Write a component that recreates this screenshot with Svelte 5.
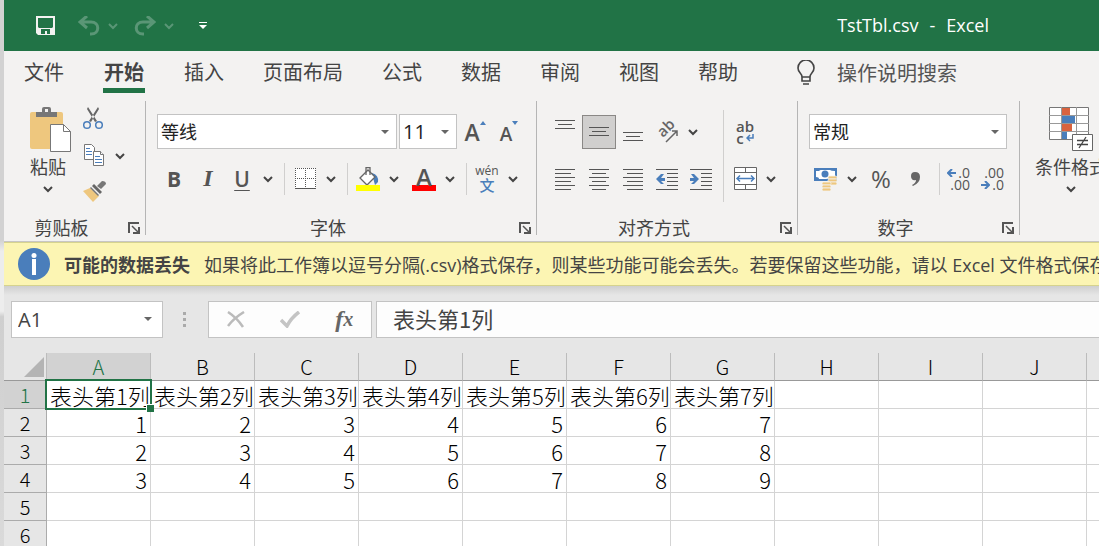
<script lang="ts">
    const tabs = ["文件", "开始", "插入", "页面布局", "公式", "数据", "审阅", "视图", "帮助"];
    let activeTab = $state("开始");

    const columns = ["A", "B", "C", "D", "E", "F", "G", "H", "I", "J", "K"];
    const rows: (string | number)[][] = [
        [1, 2, 3, 4, 5, 6, 7].map((n) => `表头第${n}列`),
        [1, 2, 3, 4, 5, 6, 7],
        [2, 3, 4, 5, 6, 7, 8],
        [3, 4, 5, 6, 7, 8, 9],
        [],
        [],
    ];

    let selected = $state({ row: 0, col: 0 });
    let cellName = $derived(columns[selected.col] + (selected.row + 1));
    let cellValue = $derived(rows[selected.row][selected.col] ?? "");

    // line spans [x1, x2] for the alignment icons
    const full = [0, 20];
    const verticalLines = [full, [3, 17], full];
    const alignments = [
        { label: "左对齐", lines: [full, [0, 16], full, [0, 16], full, [0, 16]] },
        { label: "居中", lines: [full, [3, 17], full, [3, 17], full, [3, 17]] },
        { label: "右对齐", lines: [full, [4, 20], full, [4, 20], full, [4, 20]] },
    ];
</script>

{#snippet chevron(label: string)}
    <button class="chev" aria-label={label}>
        <svg width="10" height="8" viewBox="0 0 10 8">
            <path d="M1 2l4 4 4-4" fill="none" stroke="currentColor" stroke-width="2" />
        </svg>
    </button>
{/snippet}

{#snippet arrow()}
    <svg class="arrow" width="8" height="4" viewBox="0 0 8 4">
        <path d="M0 0h8L4 4z" fill="#666" />
    </svg>
{/snippet}

{#snippet footer(name: string)}
    <div class="group-footer">
        <span class="group-name">{name}</span>
        <button class="launcher" aria-label="{name}设置">
            <svg width="12" height="12" viewBox="0 0 12 12" fill="none" stroke="#555">
                <path d="M1 11V1h10" stroke-width="2" />
                <path d="M4 4l6 6" stroke-width="1.5" />
                <path d="M12 5v7H5v-2h5V5z" fill="#555" stroke="none" />
            </svg>
        </button>
    </div>
{/snippet}

{#snippet lineIcon(lines: number[][], top: number)}
    <svg width="20" height="24" viewBox="0 0 20 24" shape-rendering="crispEdges">
        {#each lines as [x1, x2], i}
            <rect x={x1} y={top + i * 4} width={x2 - x1} height="1" fill="#555" />
        {/each}
    </svg>
{/snippet}

<div class="window">
    <div class="desktop-edge"></div>
    <div class="app">
        <header class="titlebar">
            <div class="quick-access">
                <button aria-label="保存">
                    <svg width="20" height="20" viewBox="0 0 20 20">
                        <path d="M0 0h19v19H2l-2-2zM2 2v9l1 1h13l1-1V2zM5 13v5h4v-3h2v3h3v-5z" fill="#f3f2f1" fill-rule="evenodd" />
                    </svg>
                </button>
                <button class="dim undo" aria-label="撤消">
                    <svg width="22" height="20" viewBox="0 0 22 20" fill="none" stroke="currentColor" stroke-width="3">
                        <path d="M9 0L2 6l7 6M2 6h11c9 0 9 12 0 12h-1" />
                    </svg>
                </button>
                <span class="dim">{@render chevron("撤消列表")}</span>
                <button class="dim" aria-label="恢复">
                    <svg width="22" height="20" viewBox="0 0 22 20" fill="none" stroke="currentColor" stroke-width="3">
                        <path d="M13 0l7 6-7 6M20 6H9c-9 0-9 12 0 12h1" />
                    </svg>
                </button>
                <span class="dim">{@render chevron("恢复列表")}</span>
                <button class="customize" aria-label="自定义快速访问工具栏">
                    <svg width="8" height="8" viewBox="0 0 8 8" fill="#fff">
                        <path d="M0 0h8v1H0zM0 3h8L4 7z" />
                    </svg>
                </button>
            </div>
            <div class="title"><span>TstTbl.csv</span><span>-</span><span>Excel</span></div>
        </header>

        <nav class="tabs">
            {#each tabs as tab}
                <button class="tab" class:active={tab === activeTab} onclick={() => (activeTab = tab)}>{tab}</button>
            {/each}
            <label class="tell-me">
                <svg width="18" height="26" viewBox="0 0 18 26" fill="none" stroke="#444" stroke-width="2">
                    <path d="M5 17c0-4-4-4-4-9a8 8 0 0 1 16 0c0 5-4 5-4 9M5 17h8M5 17v4h8v-4M6 24h6" stroke-width="1.6" />
                </svg>
                <input placeholder="操作说明搜索" aria-label="操作说明搜索" />
            </label>
        </nav>

        <div class="ribbon">
            <section class="group">
                <div class="group-body clipboard">
                    <button class="large paste">
                        <svg width="42" height="46" viewBox="0 0 42 46">
                            <rect y="5" width="33" height="37" rx="2" fill="#eec77e" />
                            <path d="M6 5h6V2q0-2 2-2h5q2 0 2 2v3h6v5H6z" fill="#777" />
                            <rect x="15" y="2" width="3" height="3" fill="#f3f2f1" />
                            <path d="M20.500 17.500h13l7 7v20h-20z" fill="#fff" stroke="#777" />
                            <path d="M33.500 17.500v7h7" fill="none" stroke="#777" />
                        </svg>
                        <span class="paste-label">
                            粘贴
                            <svg class="large-chev" width="10" height="8" viewBox="0 0 10 8">
                                <path d="M1 2l4 4 4-4" fill="none" stroke="currentColor" stroke-width="2" />
                            </svg>
                        </span>
                    </button>
                    <div class="stack">
                        <button aria-label="剪切">
                            <svg width="20" height="23" viewBox="0 0 20 23">
                                <path d="M5 0l9 14-2 1L4 2zM15 0L6 14l2 1 8-13z" fill="#666" />
                                <circle cx="4" cy="18" r="3.300" fill="none" stroke="#4a7ebb" stroke-width="1.500" />
                                <circle cx="16" cy="18" r="3.300" fill="none" stroke="#4a7ebb" stroke-width="1.500" />
                            </svg>
                        </button>
                        <div class="pair">
                            <button aria-label="复制">
                                <svg width="22" height="23" viewBox="0 0 22 23" fill="#fff" stroke="#777">
                                    <path d="M1.500.5h7l3 3v12h-10z" />
                                    <path d="M3 4.500h4M3 7.500h6M3 10.500h6" stroke="#4a7ebb" />
                                    <path d="M10.500 7.500h7l3 3v11h-10z" />
                                    <path d="M17.500 7.500v3h3" />
                                    <path d="M12 12.500h5M12 15.500h7M12 18.500h7" stroke="#4a7ebb" />
                                </svg>
                            </button>
                            {@render chevron("复制选项")}
                        </div>
                        <button aria-label="格式刷">
                            <svg width="23" height="21" viewBox="0 0 23 21">
                                <path d="M0 10l7-3 9 8-6 6z" fill="#eec77e" />
                                <path d="M9 5l2-2 8 8-2 2z" fill="#666" />
                                <path d="M7 7l1-1 8 8-1 1z" fill="#777" />
                                <path d="M14 5l5-5q4 0 4 3l-5 5z" fill="#777" />
                            </svg>
                        </button>
                    </div>
                </div>
                {@render footer("剪贴板")}
            </section>

            <section class="group">
                <div class="group-body">
                    <div class="row">
                        <div class="combo font-name">
                            <select aria-label="字体"><option>等线</option></select>
                            {@render arrow()}
                        </div>
                        <div class="combo font-size">
                            <select aria-label="字号"><option>11</option></select>
                            {@render arrow()}
                        </div>
                        <button class="icon grow" aria-label="增大字号">A<svg width="6" height="4" viewBox="0 0 6 4"><path d="M0 4h6L3 0z" fill="#4a7ebb" /></svg></button>
                        <button class="icon grow shrink" aria-label="减小字号">A<svg width="6" height="4" viewBox="0 0 6 4"><path d="M0 0h6L3 4z" fill="#4a7ebb" /></svg></button>
                    </div>
                    <div class="row">
                        <button class="icon glyph bold" aria-label="加粗">B</button>
                        <button class="icon glyph italic" aria-label="倾斜">I</button>
                        <button class="icon glyph underline" aria-label="下划线">U</button>
                        {@render chevron("下划线选项")}
                        <span class="sep"></span>
                        <button class="icon" aria-label="边框">
                            <svg width="21" height="21" viewBox="0 0 21 21">
                                <rect width="21" height="20" fill="#fff" />
                                <path d="M0 .5h21M0 10.500h21M.5 0v20M10.500 0v20M20.500 0v20" stroke="#555" stroke-dasharray="1 1" />
                                <path d="M0 20.500h21" stroke="#555" />
                            </svg>
                        </button>
                        {@render chevron("边框选项")}
                        <span class="sep"></span>
                        <div class="color-buttons">
                            <div class="pair">
                                <button class="icon" aria-label="填充颜色">
                                    <svg width="24" height="24" viewBox="0 0 24 24">
                                        <path d="M16 6q7 2 6 9l-3 3q-1-5-3-9z" fill="#4a7ebb" />
                                        <path d="M4 11l8-8 7 7-8 8z" fill="#fff" stroke="#666" stroke-width="1.300" />
                                        <path d="M10 8V.7h4V8" fill="none" stroke="#666" stroke-width="1.300" />
                                        <rect y="18" width="24" height="6" fill="#ff0" />
                                    </svg>
                                </button>
                                {@render chevron("填充颜色选项")}
                            </div>
                            <div class="pair">
                                <button class="icon font-color" aria-label="字体颜色"><span>A</span></button>
                                {@render chevron("字体颜色选项")}
                            </div>
                        </div>
                        <span class="sep"></span>
                        <button class="icon phonetic"><span>wén</span><b>文</b></button>
                        {@render chevron("拼音选项")}
                    </div>
                </div>
                {@render footer("字体")}
            </section>

            <section class="group">
                <div class="align-columns">
                    <div class="group-body">
                        <div class="row">
                            <button class="icon" aria-label="顶端对齐">{@render lineIcon(verticalLines, 0)}</button>
                            <button class="icon pressed" aria-label="垂直居中">{@render lineIcon(verticalLines, 7)}</button>
                            <button class="icon" aria-label="底端对齐">{@render lineIcon(verticalLines, 12)}</button>
                            <button class="icon" aria-label="方向">
                                <svg width="24" height="24" viewBox="0 0 24 24">
                                    <text x="8" y="18" font-size="15" font-weight="600" fill="#666" transform="rotate(-45 8 18)">ab</text>
                                    <path d="M11 22L22 11M17 11h5v5" fill="none" stroke="#666" stroke-width="1.500" />
                                </svg>
                            </button>
                            {@render chevron("方向选项")}
                        </div>
                        <div class="row">
                            {#each alignments as item}
                                <button class="icon" aria-label={item.label}>{@render lineIcon(item.lines, 2)}</button>
                            {/each}
                            {#each ["减少缩进量", "增加缩进量"] as label, i}
                                <button class="icon" aria-label={label}>
                                    <svg width="22" height="24" viewBox="0 0 22 24">
                                        <path d="M0 2.500h22M11 6.500h11M11 10.500h11M11 14.500h11M11 18.500h11M0 22.500h22" stroke="#555" />
                                        {#if i === 0}
                                            <path d="M0 12l5-5h3L5 11h4v3H5l3 3H5z" fill="#4a7ebb" />
                                        {:else}
                                            <path d="M9 12L4 7H1l3 4H0v3h4l-3 3h3z" fill="#4a7ebb" />
                                        {/if}
                                    </svg>
                                </button>
                            {/each}
                        </div>
                    </div>
                    <span class="tall-sep"></span>
                    <div class="group-body merge-column">
                        <div class="row">
                            <button class="icon wrap">
                                <span>ab</span>
                                <span>c<svg width="8" height="8" viewBox="0 0 8 8" fill="none" stroke="#4a7ebb" stroke-width="1.500"><path d="M7 0v4H1M4 1L1 4l3 3" /></svg></span>
                            </button>
                        </div>
                        <div class="row">
                            <button class="icon" aria-label="合并后居中">
                                <svg width="23" height="23" viewBox="0 0 23 23">
                                    <path d="M.5.5h22v22H.5zM.5 5.500h22M.5 17.500h22M11.500 0v5M11.500 18v5" fill="#fff" stroke="#666" />
                                    <path d="M3 11.500h17M6 8.500l-3 3 3 3M17 8.500l3 3-3 3" fill="none" stroke="#4a7ebb" stroke-width="1.500" />
                                </svg>
                            </button>
                            {@render chevron("合并选项")}
                        </div>
                    </div>
                </div>
                {@render footer("对齐方式")}
            </section>

            <section class="group">
                <div class="group-body number-body">
                    <div class="row">
                        <div class="combo number-format">
                            <select aria-label="数字格式"><option>常规</option></select>
                            {@render arrow()}
                        </div>
                    </div>
                    <div class="row">
                        <button class="icon" aria-label="会计数字格式">
                            <svg width="24" height="24" viewBox="0 0 24 24">
                                <rect y="1" width="23" height="13" fill="#4a7ebb" />
                                <path d="M2 4h3q1-1 2-1h9q1 1 5 1v6h-3q-2 2-9 2H5q0-2-3-2z" fill="#fff" />
                                <circle cx="11" cy="7" r="3.500" fill="#4a7ebb" />
                                <g fill="#eec77e" stroke="#f3f2f1" stroke-width=".8">
                                    <rect x="14" y="9" width="9" height="3" rx="1.500" />
                                    <rect x="14" y="12" width="9" height="3" rx="1.500" />
                                    <rect x="14" y="15" width="9" height="3" rx="1.500" />
                                    <rect x="8" y="15" width="9" height="3" rx="1.500" />
                                    <rect x="8" y="18" width="9" height="3" rx="1.500" />
                                    <rect x="8" y="21" width="9" height="3" rx="1.500" />
                                </g>
                            </svg>
                        </button>
                        {@render chevron("会计格式选项")}
                        <button class="icon percent">%</button>
                        <button class="icon" aria-label="千位分隔样式">
                            <svg width="9" height="14" viewBox="0 0 9 14">
                                <path d="M4 0q5 0 5 5 0 6-7 9l-1-1q4-2 4-5-5 1-5-4 0-4 4-4z" fill="#666" />
                            </svg>
                        </button>
                        <span class="sep"></span>
                        <button class="icon decimals" aria-label="增加小数位数">
                            <span><svg width="9" height="8" viewBox="0 0 9 8" fill="none" stroke="#4a7ebb" stroke-width="2"><path d="M9 4H2M5 0L1 4l4 4" /></svg>.0</span>
                            <span>.00</span>
                        </button>
                        <button class="icon decimals" aria-label="减少小数位数">
                            <span>.00</span>
                            <span><svg width="9" height="8" viewBox="0 0 9 8" fill="none" stroke="#4a7ebb" stroke-width="2"><path d="M0 4h7M4 0l4 4-4 4" /></svg>.0</span>
                        </button>
                    </div>
                </div>
                {@render footer("数字")}
            </section>

            <section class="group styles">
                <button class="large">
                    <svg width="44" height="46" viewBox="0 0 44 46">
                        <path d="M.5.500h39v32H.5z" fill="#fff" stroke="#777" />
                        <path d="M0 8.500h40M0 16.500h40M0 24.500h40M12.500 0v32M27.500 0v32" stroke="#999" />
                        <path d="M13 1h8v7h-8zM13 17h10v7H13z" fill="#d9633f" />
                        <path d="M13 9h13v7H13zM13 25h5v7h-5z" fill="#4a7ebb" />
                        <path d="M23.500 27.500h20v16h-20z" fill="#fff" stroke="#666" />
                        <path d="M28 33.500h11M28 37.500h11M37 30l-7 11" stroke="#444" stroke-width="1.300" />
                    </svg>
                    <span>条件格式</span>
                    <svg class="large-chev" width="10" height="8" viewBox="0 0 10 8">
                        <path d="M1 2l4 4 4-4" fill="none" stroke="currentColor" stroke-width="2" />
                    </svg>
                </button>
            </section>
        </div>

        <div class="warning" role="alert">
            <svg width="32" height="32" viewBox="0 0 32 32">
                <circle cx="16" cy="16" r="16" fill="#4a7ebb" />
                <circle cx="16" cy="7.500" r="2.500" fill="#fff" />
                <rect x="14" y="11" width="4" height="16" fill="#fff" />
            </svg>
            <strong>可能的数据丢失</strong>
            <span>如果将此工作簿以逗号分隔(.csv)格式保存，则某些功能可能会丢失。若要保留这些功能，请以 Excel 文件格式保存。</span>
        </div>

        <div class="formula-bar">
            <div class="combo name-box">
                <input value={cellName} aria-label="名称框" />
                {@render arrow()}
            </div>
            <svg class="dots" width="3" height="16" viewBox="0 0 3 16" fill="#aaa">
                <path d="M0 0h3v3H0zM0 6h3v3H0zM0 12h3v3H0z" />
            </svg>
            <div class="formula-actions">
                <button aria-label="取消">
                    <svg width="18" height="17" viewBox="0 0 18 17">
                        <path d="M1 1q9 6 15 15M17 1Q7 7 1 15" fill="none" stroke="#bbb" stroke-width="2.500" />
                    </svg>
                </button>
                <button aria-label="输入">
                    <svg width="20" height="17" viewBox="0 0 20 17">
                        <path d="M1 9l6 6Q11 7 19 1" fill="none" stroke="#c4c4c4" stroke-width="3.500" />
                    </svg>
                </button>
                <button class="fx" aria-label="插入函数"><span>f</span>x</button>
            </div>
            <input class="formula" value={cellValue} aria-label="编辑栏" />
        </div>

        <div class="sheet">
            <table>
                <thead>
                    <tr>
                        <th class="corner" aria-label="全选">
                            <svg width="20" height="20" viewBox="0 0 20 20"><path d="M20 0v20H0z" fill="#b4b4b4" /></svg>
                        </th>
                        {#each columns as column, c}
                            <th class:current={c === selected.col}>{column}</th>
                        {/each}
                    </tr>
                </thead>
                <tbody>
                    {#each rows as row, r}
                        <tr>
                            <th class:current={r === selected.row}>{r + 1}</th>
                            {#each columns as _, c}
                                <td
                                    class:number={typeof row[c] === "number"}
                                    class:selected={r === selected.row && c === selected.col}
                                    onclick={() => (selected = { row: r, col: c })}
                                >{row[c] ?? ""}</td>
                            {/each}
                        </tr>
                    {/each}
                </tbody>
            </table>
        </div>
    </div>
</div>

<style>
    :global(body) {
        overflow: hidden;
    }

    .window {
        display: flex;
        height: 100vh;
        overflow: hidden;
        font-family: "Open Sans", "Noto Sans CJK SC", sans-serif;
        font-size: 18px;
        color: #444;
        background: #e6e6e6;
    }

    .window * {
        box-sizing: border-box;
    }

    .desktop-edge {
        flex: none;
        width: 4px;
        background: linear-gradient(#d2d2d2 44%, #ededed 46%, #ededed 57%, #cfcfcf 58%, #dadada);
    }

    .app {
        flex: 1;
        min-width: 0;
        display: flex;
        flex-direction: column;
    }

    button {
        display: flex;
        align-items: center;
        justify-content: center;
        flex: none;
        padding: 0;
        border: none;
        background: none;
        font: inherit;
        color: inherit;
        white-space: nowrap;
    }

    input,
    select {
        font: inherit;
        color: inherit;
        border: none;
        background: none;
        outline: none;
    }

    svg {
        flex: none;
        display: block;
    }

    /* title bar */
    .titlebar {
        flex: none;
        display: flex;
        align-items: center;
        justify-content: space-between;
        height: 51px;
        padding: 0 110px 0 32px;
        background: #217346;
        color: #fff;
    }

    .quick-access {
        display: flex;
        align-items: center;
        height: 54px;
    }

    .undo {
        margin-left: 22px;
    }

    .dim {
        color: #5a9676;
    }

    .quick-access > .dim + .dim {
        margin-left: 4px;
    }

    .quick-access > button.dim:nth-child(4) {
        margin-left: 12px;
    }

    .customize {
        margin-left: 21px;
    }

    .title {
        display: flex;
        gap: 11px;
        height: 56px;
        line-height: 54px;
        font-size: 18px;
    }

    /* tabs */
    .tabs {
        flex: none;
        display: flex;
        gap: 39px;
        padding: 7px 20px 4px;
        background: #f3f2f1;
        font-size: 20px;
    }

    .tab {
        height: 35px;
        line-height: 30px;
        border-bottom: 5px solid transparent;
    }

    .tab.active {
        padding: 0 1px;
        border-bottom-color: #217346;
        font-weight: 700;
    }

    .tell-me {
        display: flex;
        align-items: center;
        gap: 22px;
        height: 30px;
        margin-left: 20px;
    }

    .tell-me input {
        width: 160px;
        padding: 0;
    }

    .tell-me input::placeholder {
        color: #555;
    }

    /* ribbon */
    .ribbon {
        flex: none;
        display: flex;
        padding: 4px 0 6px;
        background: #f3f2f1;
        border-bottom: 1px solid #c8c6c4;
    }

    .group {
        flex: none;
        display: flex;
        flex-direction: column;
        justify-content: space-between;
        height: 134px;
        padding: 0 5px 0 11px;
        border-right: 1px solid #b5b5b5;
    }

    .group-body {
        display: flex;
        flex-direction: column;
        gap: 12px;
        padding-top: 13px;
    }

    .row,
    .pair {
        display: flex;
        align-items: center;
    }

    .row {
        height: 35px;
        padding-right: 5px;
    }

    .group-footer {
        display: flex;
        justify-content: space-between;
        height: 14px;
        line-height: 14px;
    }

    .group-name {
        flex: 1;
        padding-right: 20px;
        text-align: center;
        white-space: nowrap;
    }

    .clipboard {
        flex-direction: row;
        gap: 11px;
        padding: 6px 11px 0 15px;
    }

    .large {
        flex-direction: column;
        justify-content: flex-start;
        line-height: 28px;
    }

    .large-chev {
        margin-top: 4px;
    }

    .paste {
        align-items: flex-start;
    }

    .paste-label {
        display: flex;
        flex-direction: column;
        align-items: center;
    }

    .stack {
        display: flex;
        flex-direction: column;
        align-items: flex-start;
        gap: 14px;
    }

    .stack .chev {
        height: 23px;
        margin-left: 6px;
    }

    .icon {
        width: 34px;
        height: 34px;
        color: #555;
    }

    .chev {
        width: 18px;
        height: 34px;
    }

    .pressed {
        background: #d0cfce;
        border: 1px solid #8a8886;
    }

    .sep {
        width: 1px;
        height: 32px;
        margin: 0 3px 0 7px;
        background: #d0cfce;
    }

    .tall-sep {
        width: 1px;
        height: 92px;
        margin: 9px 4px 0 0;
        background: #d0cfce;
    }

    .merge-column {
        padding-right: 7px;
    }

    .combo {
        position: relative;
        height: 35px;
        background: #fff;
        border: 1px solid #c3c3c3;
        color: #222;
    }

    .combo select,
    .combo input {
        width: 100%;
        height: 100%;
        padding: 0 20px 0 3px;
        appearance: none;
    }

    .arrow {
        position: absolute;
        top: 15px;
        right: 7px;
        pointer-events: none;
    }

    .font-name {
        width: 240px;
    }

    .font-size {
        width: 58px;
        margin: 0 1px 0 2px;
        font-size: 20px;
    }

    .number-body .row {
        padding-right: 3px;
    }

    .number-format {
        width: 198px;
    }

    .grow {
        align-items: flex-start;
        font-size: 23px;
        font-weight: 600;
        line-height: 34px;
    }

    .grow svg {
        margin-top: 6px;
    }

    .shrink {
        font-size: 19px;
        line-height: 38px;
    }

    .glyph {
        font-size: 21px;
        font-weight: 700;
    }

    .italic {
        font-family: "Liberation Serif", serif;
        font-style: italic;
        font-size: 24px;
    }

    .underline {
        font-weight: 600;
        text-decoration: underline 1px;
        text-underline-offset: 3px;
    }

    .color-buttons {
        display: flex;
        gap: 4px;
    }

    .font-color span {
        width: 24px;
        height: 24px;
        line-height: 20px;
        font-size: 24px;
        font-weight: 600;
        border-bottom: 6px solid #f00;
    }

    .phonetic,
    .wrap,
    .decimals {
        flex-direction: column;
        font-size: 14px;
        line-height: 12px;
    }

    .phonetic {
        font-size: 12px;
    }

    .phonetic b {
        color: #4a7ebb;
        font-size: 15px;
        font-weight: 500;
        line-height: 16px;
    }

    .wrap {
        font-size: 15px;
        font-weight: 600;
    }

    .wrap span,
    .decimals span {
        display: flex;
        align-items: center;
        gap: 2px;
    }

    .decimals {
        align-items: flex-end;
        padding-right: 7px;
    }

    .align-columns {
        display: flex;
    }

    .percent {
        margin-left: 3px;
        font-size: 24px;
    }

    .styles {
        padding: 6px 0 0 15px;
        border-right: none;
    }

    /* message bar */
    .warning {
        flex: none;
        display: flex;
        align-items: center;
        gap: 14px;
        height: 44px;
        padding-left: 14px;
        overflow: hidden;
        white-space: nowrap;
        background: #fcf5b3;
        border: solid #d6d38e;
        border-width: 1px 0;
    }

    /* formula bar */
    .formula-bar {
        flex: none;
        display: flex;
        align-items: center;
        padding: 15px 0 15px 7px;
        background: linear-gradient(#cfcfcf, #e6e6e6 9px);
    }

    .name-box {
        width: 152px;
        height: 37px;
        color: #444;
        font-size: 20px;
    }

    .name-box input {
        padding-left: 6px;
    }

    .name-box .arrow {
        right: 10px;
    }

    .dots {
        margin: 0 22px 0 20px;
    }

    .formula-actions {
        display: flex;
        justify-content: space-around;
        width: 164px;
        height: 37px;
        margin-right: 4px;
        background: #fdfdfd;
        border: 1px solid #c3c3c3;
    }

    .fx {
        color: #666;
        font-family: "Liberation Serif", serif;
        font-style: italic;
        font-weight: 700;
        font-size: 20px;
    }

    .fx span {
        font-size: 24px;
    }

    .formula {
        flex: 1;
        min-width: 0;
        height: 37px;
        padding: 0 16px 4px;
        background: #fdfdfd;
        border: 1px solid #c3c3c3;
        border-right: none;
        font-family: "Noto Sans CJK SC", sans-serif;
        font-size: 22px;
    }

    /* sheet */
    .sheet {
        flex: 1;
        min-height: 0;
        overflow: hidden;
        background: #fff;
    }

    table {
        table-layout: fixed;
        width: 1187px;
        border-collapse: separate;
        border-spacing: 0;
        font-family: "Noto Sans CJK SC", sans-serif;
        font-size: 22px;
        font-weight: 300;
        line-height: 26px;
        color: #000;
    }

    th,
    td {
        height: 28px;
        padding: 1px 3px 0;
        border: solid #d4d4d4;
        border-width: 0 1px 1px 0;
        white-space: nowrap;
    }

    th {
        padding: 1px 0 0;
        background: #e6e6e6;
        border-color: #ababab;
        font-size: 20px;
        font-weight: 300;
        text-align: center;
    }

    thead th {
        border-bottom-color: #999;
        border-right-color: #bcbcbc;
    }

    .corner {
        width: 43px;
    }

    .corner svg {
        margin-left: 20px;
    }

    .current {
        background: #d2d2d2;
        color: #217346;
    }

    .number {
        text-align: right;
    }

    .selected {
        position: relative;
    }

    .selected::before {
        content: "";
        position: absolute;
        inset: -2px;
        border: 2px solid #217346;
    }

    .selected::after {
        content: "";
        position: absolute;
        right: -4px;
        bottom: -4px;
        width: 7px;
        height: 7px;
        background: #217346;
        border: solid #fff;
        border-width: 1px 0 0 1px;
    }
</style>
